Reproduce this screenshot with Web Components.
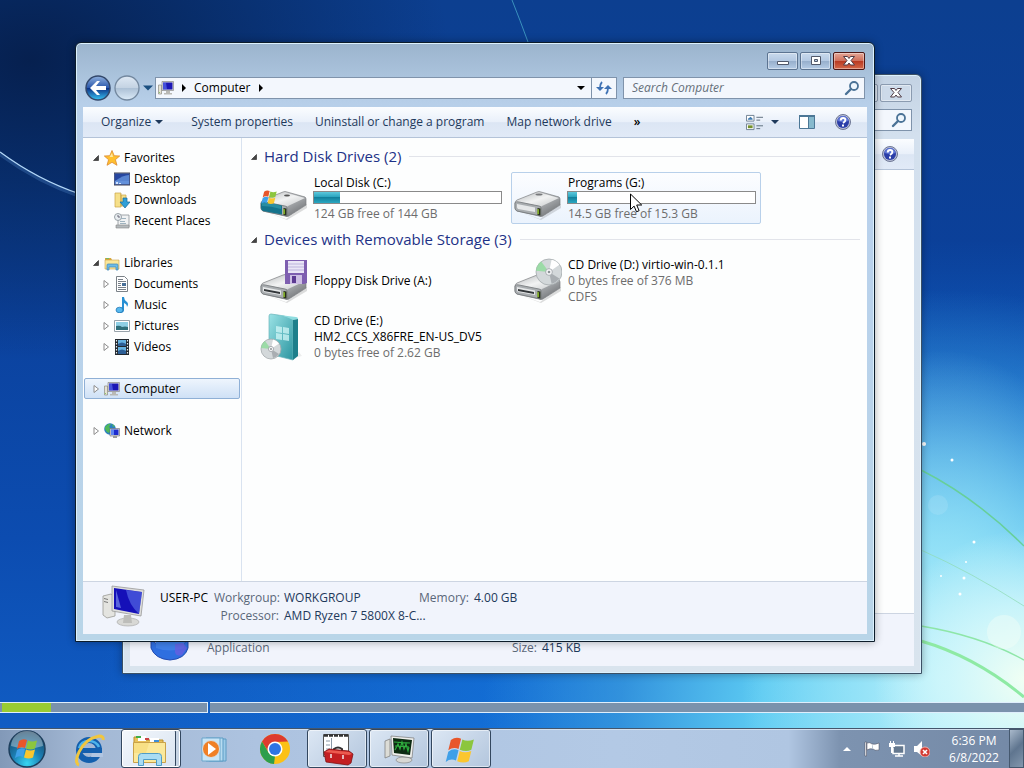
<!DOCTYPE html>
<html lang="en">
<head>
<meta charset="utf-8">
<title>Computer</title>
<style>
html, body{
    margin:0;
    height:100%;
}
body{
    font-family:"Open Sans", "Noto Sans", sans-serif;
    font-size:12px;
    line-height:16px;
    color:#000;
}
</style>
</head>
<body>
<desk-top>
    <explorer-window class="back" inactive placeholder="Search">
        <file-details slot="details" icon="app" wide>
            <span></span><span></span><span></span><span></span>
            <span class="kind">Application</span><span></span><span class="key">Size:</span><span class="val">415 KB</span>
        </file-details>
    </explorer-window>
    <explorer-window class="front" location="Computer" placeholder="Search Computer">
        <nav-tree slot="tree"></nav-tree>
        <drive-group label="Hard Disk Drives (2)">
            <drive-tile icon="cdrive" label="Local Disk (C:)" used="14" note="124 GB free of 144 GB"></drive-tile>
            <drive-tile icon="drive" label="Programs (G:)" used="5" note="14.5 GB free of 15.3 GB" hot></drive-tile>
        </drive-group>
        <drive-group label="Devices with Removable Storage (3)">
            <drive-tile icon="floppy" label="Floppy Disk Drive (A:)"></drive-tile>
            <drive-tile icon="cd" label="CD Drive (D:) virtio-win-0.1.1" note="0 bytes free of 376 MB" extra="CDFS"></drive-tile>
            <drive-tile icon="box" label="CD Drive (E:)" second="HM2_CCS_X86FRE_EN-US_DV5" note="0 bytes free of 2.62 GB"></drive-tile>
        </drive-group>
        <file-details slot="details" icon="pc">
            <span class="name">USER-PC</span><span class="key">Workgroup:</span><span class="val">WORKGROUP</span><span class="key">Memory:</span><span class="val">4.00 GB</span>
            <span></span><span class="key">Processor:</span><span class="val">AMD Ryzen 7 5800X 8-C...</span>
        </file-details>
    </explorer-window>
    <progress-strip slot="strip"></progress-strip>
    <task-bar slot="bar"></task-bar>
</desk-top>

<script>
// every icon: [viewBox, markup]
const flag = `<path fill="#e8562a" d="M3 4q4-3 8-1L9 11q-4-2-8 1z"/><path fill="#8cc63e" d="M12 3.500q4 2 9 0l-2 8q-4 2-9 0z"/><path fill="#3fa0e8" d="M1 13q4-3 8-1l-2 8q-4-2-8 1z"/><path fill="#fbc62e" d="M10 12.500q4 2 9 0l-2 8q-4 2-9 0z"/>`;
const glass = `<linearGradient id="m" x2="1" y2="1"><stop stop-color="#f4f4f4"/><stop offset=".5" stop-color="#b0b3b6"/><stop offset="1" stop-color="#5f6265"/></linearGradient><linearGradient id="t" x2="1" y2="1"><stop stop-color="#b9bcbe"/><stop offset=".5" stop-color="#f2f3f3"/><stop offset="1" stop-color="#c4c7c9"/></linearGradient>`;
const driveBody = `${glass}<path fill="#0002" d="M6 38l20 7 21-15v4L27 46z"/><path fill="url(#m)" stroke="#7c7f82" stroke-width=".7" d="M1 29Q1 27 3 26L23 18q2-1 4 0l18 5q1 1 1 2v6L29 42q-2 1-4 0L3 37q-2-1-2-3z"/><path fill="url(#t)" d="M3 27l20-8q2-1 4 0l18 5-17 8q-1 1-3 0z"/><path fill="#a9adb0" stroke="#6f7376" stroke-width=".7" d="M1 29q1-2 4-1l20 4q2 0 2 2v8L3 37q-2-1-2-3z"/><path fill="#e6e8e9" d="M3 30l18 3.500v4.500L4 35q-1-1-1-2z"/><path fill="#28301c" d="M23.500 34l3 .500v7l-3-.500z"/><path fill="#a6e02c" d="M23.500 35l1.200.200v5l-1.200-.200z"/>`;
const disc = (x, y, r) => `<circle cx="${x}" cy="${y}" r="${r}" fill="#d3d8da" stroke="#a3a9ac" stroke-width=".8"/><path fill="#8fdc9a" opacity=".8" d="M${x} ${y}l${-r} ${-r * .1}a${r} ${r} 0 0 1 ${r * .4} ${-r * .7}z"/><path fill="#a9aeb2" d="M${x} ${y}l${r * .8} ${r * .5}a${r} ${r} 0 0 1 ${-r * .6} ${r * .4}z"/><path fill="#fff" d="M${x} ${y}l${r * .2} ${-r * .95}a${r} ${r} 0 0 1 ${r * .6} ${r * .4}z"/><circle cx="${x}" cy="${y}" r="${r * .26}" fill="#f5f6f7" stroke="#9aa0a4" stroke-width=".8"/><circle cx="${x}" cy="${y}" r="${r * .1}" fill="#8c9296"/>`;
const folder = `<path fill="#d9a93c" d="M1 3h6l1 2h6v9H1z"/><path fill="#fbe79a" stroke="#c9a24a" stroke-width=".6" d="M1 5h14v9H1z"/>`;
const icons = {
    star:['0 0 16 16', `<path fill="#ffc02f" stroke="#dd8a30" stroke-width=".8" d="M8 .500l2.200 5.200 5.500.300-4.300 3.700L13 15.300 8 12.300l-5 3 1.600-5.600L.300 6l5.500-.300z"/><path fill="#ffe9a0" d="M8 3l1 4H5.500z"/>`],
    desktop:['0 0 16 16', `<rect y="2" width="16" height="12" fill="#4a6fc0" stroke="#445"/><path fill="#2747a0" d="M1 3h14v7H1z"/><path fill="#6fa0e6" d="M1 10q8-6 14-6v9H1z" opacity=".7"/><path fill="#cfe2ff" d="M2 11h2v2H2zM5 12h2v1H5z"/>`],
    downloads:['0 0 16 16', `<path fill="#f6e08a" stroke="#c9a445" stroke-width=".7" d="M1 1h6v14H1zM7 3h5v11H7z"/><path fill="#dcb95a" d="M6 2h1v13H6z"/><path fill="#2f9fd8" stroke="#166a9c" stroke-width=".7" d="M9 6h4v4h3l-5 6-5-6h3z"/>`],
    recent:['0 0 16 16', `<path fill="#f0f2f3" stroke="#8b9398" stroke-width=".8" d="M5 2h10v12H4V6z"/><circle cx="4" cy="4" r="3.500" fill="#e9eef1" stroke="#9aa2a8"/><path stroke="#667" fill="none" d="M4 2v2h2"/><path fill="#9fb3bf" d="M7 5h5v1H7zM6 8h5v1H6zM6 10h6v1H6z"/><path fill="#b4babd" stroke="#888" stroke-width=".6" d="M2 12h13v3H2z"/>`],
    libraries:['0 0 16 16', folder + `<path fill="#78b968" d="M2 3h3v1H2z"/><path fill="#6dbbe6" stroke="#3d86b8" stroke-width=".7" d="M3 15V10q0-1 1-1h9q1 0 1 1v5h-2v-3H5v3z"/>`],
    documents:['0 0 16 16', `<path fill="#fff" stroke="#7b8288" d="M2.500.500h8l3 3v12h-11z"/><path fill="#777f88" d="M4 3h5v1H4zM4 5h8v1H4zM4 7h3v1H4zM4 9h3v1H4zM4 11h8v1H4zM4 13h8v1H4z"/><path fill="#476f98" d="M8 7h4v3H8z"/>`],
    music:['0 0 16 16', `<path fill="#2790d4" d="M8 0h2q0 3 3 5 2 2 0 5 0-3-3-4v7q0 3-4 3-3-.500-3-3 1-3 5-2.500z"/><ellipse cx="5.500" cy="13" rx="3.500" ry="2.800" fill="#56b8ee" stroke="#1c70ae" stroke-width=".7"/>`],
    pictures:['0 0 16 16', `<path fill="#fff" stroke="#98a3ab" d="M.500 2.500h15v11H.500z"/><path fill="#8fd0e6" d="M2 4h12v8H2z"/><path fill="#30707c" d="M2 8q4-1 6 1 3-1 6 0v3H2z"/>`],
    videos:['0 0 16 16', `<path fill="#22282e" d="M1 0h14v16H1z"/><path fill="#67b2e0" d="M4 1h8v6H4zM4 8h8v7H4z"/><path fill="#2d5f96" d="M4 5q4-3 8 0v2H4zM4 12q4-3 8 0v3H4z"/><path stroke="#e8eef2" stroke-width="1.200" stroke-dasharray="1.500 1.500" d="M2.500 1v14M13.500 1v14"/>`],
    computer:['0 0 16 16', `<path fill="#e6e2d3" stroke="#8d8d84" stroke-width=".7" d="M.500 5h3v9h-3z"/><path fill="#8fce6a" d="M1 12h1v1H1z"/><path fill="#dcdcda" stroke="#8a8a8a" stroke-width=".7" d="M4 1.500h11.500v9H4z"/><path fill="#1b17b5" d="M5 2.500h9.500v7H5z"/><path fill="#6f8bff" d="M5 2.500h3l1 7H5z" opacity=".5"/><path fill="#b9b9b5" d="M8 11h4v2h2v1.500H6V13h2z"/>`],
    network:['0 0 16 16', `<circle cx="6" cy="6" r="5.800" fill="#2a7fc0"/><path fill="#4fb75a" d="M1 4q3-4 6-3l-2 3 2 2-2 4q-3-1-4-4zM8 1l3 2-2 1z"/><path fill="#dcdcda" stroke="#667" stroke-width=".6" d="M6 5.500h9.500v7.500H6z"/><path fill="#1d2ccf" d="M7 6.500h7.500V12H7z"/><path fill="#78a9ff" d="M7 6.500h3V12H7z" opacity=".7"/><path fill="#999" d="M9 13h4v2H9z"/>`],
    drive:['0 0 48 48', driveBody + `<ellipse cx="25" cy="20.500" rx="3.500" ry="1" fill="#77797c"/>`],
    cdrive:['0 0 48 48', driveBody + `<path fill="#15738c" d="M1 29q1-2 4-1l17 3.500v9L3 37q-2-1-2-3z"/><path fill="#2f93a8" opacity=".8" d="M2 29q8-1 19 3v3q-10-3-19-3z"/><ellipse cx="27" cy="21.500" rx="3" ry="1" fill="#555"/><g transform="translate(2 15) scale(.7)">${flag}</g>`],
    floppy:['0 0 48 48', driveBody + `<path fill="#33373a" d="M4 32l16 3v2L4 34z"/><path fill="#7e5fb0" d="M25 3h22v23l-3 1H25z"/><path fill="#eae6f6" d="M28 4h16v12H28z"/><path stroke="#bcb4dc" d="M28 7h16M28 10h16M28 13h16"/><path fill="#cdbfe4" d="M30 18h12v9H30z"/><path fill="#5c3a92" d="M32 19h4v7h-4z"/>`],
    cd:['0 0 48 48', driveBody + `<path fill="#33373a" d="M4 32l16 3v2L4 34z"/>` + disc(35, 15, 13)],
    box:['0 0 48 48', `<linearGradient id="b" x2="1" y2="1"><stop stop-color="#9be3e6"/><stop offset="1" stop-color="#2b95a0"/></linearGradient><path fill="#0001" d="M30 46l12-3-3-4z"/><path fill="url(#b)" stroke="#6bb5ba" stroke-width=".7" d="M9 3q0-2 2-2 13 1 22 5v41L9 41z"/><path fill="#8fdde0" d="M11 1l25 3q2 0 2 2l-5 1Q24 2 11 1z"/><path fill="#1d7f8b" d="M33 7l5-1v37l-5 4z"/><g fill="#d9fbfb" opacity=".7"><path d="M16 13l6 1v6l-6-1zM23 14l6 1v6l-6-1zM16 20l6 1v6l-6-1zM23 21l6 1v6l-6-1z"/></g>` + disc(11, 36, 10)],
    pc:['0 0 48 48', `<path fill="#e4e4e0" stroke="#9a9a96" stroke-width=".8" d="M4 13l8-2 4 3v19l-8 2-4-3z"/><path fill="#777" d="M5 15l4 1v1l-4-1zM5 18l4 1v1l-4-1z"/><ellipse cx="29" cy="39" rx="11" ry="4" fill="#d8d8d5" stroke="#aaa" stroke-width=".7"/><path fill="#bdbdba" d="M25 32h7l1 8h-9z"/><path fill="#dededc" stroke="#999" stroke-width=".8" d="M13 3l32 4-3 26-29-5z"/><path fill="#1510b8" d="M15 5l28 4-3 22-25-5z"/><path fill="#6c88f4" d="M27 7l16 2-3 22q-10-9-13-24z" opacity=".5"/><path fill="#9fb8ff" d="M17 7l5 18-5-1z" opacity=".5"/>`],
    app:['0 0 48 48', `<path fill="#2f6fe0" stroke="#234ab0" d="M5 25l6 4q12-6 26 0l5-4v8q-3 11-18 12Q9 44 5 33z"/><path fill="#3f7fe8" d="M10 24h28v9q-14 5-28 0z"/><path fill="#6f5ce0" d="M29 29l8-1 4 5-5 7q-6 2-7-3z" opacity=".7"/>`],
    refresh:['0 0 16 16', `<path fill="none" stroke="#3f72b4" stroke-width="1.800" d="M6 2Q4 4 4 8M10 14q2-2 2-6"/><path fill="#3f72b4" d="M0 7h8l-4 4zM8 9h8l-4-4z"/>`],
    lens:['0 0 16 16', `<circle cx="10" cy="6" r="4" fill="#eef6fd" stroke="#4a7296" stroke-width="1.800"/><path stroke="#4a7296" stroke-width="2.400" stroke-linecap="round" d="M7 9l-5 5"/>`],
    help:['0 0 16 16', `<circle cx="8" cy="8" r="7.500" fill="#b8bfd8" stroke="#6d7694"/><circle cx="8" cy="8" r="6" fill="#2b3ea8"/><path fill="#5d74d4" d="M2.500 7a5.500 5 0 0 1 11 0q-5 2-11 0z"/><path fill="none" stroke="#fff" stroke-width="1.900" d="M5.700 6.500q0-2.500 2.400-2.500 2.300 0 2.300 2Q10.400 7.500 8 9"/><path fill="#fff" d="M7 10.500h2v2H7z"/>`],
    views:['0 0 18 16', `<path fill="#fff" stroke="#6d7f92" d="M.500.500h8v6h-8zM.500 9.500h8v6h-8z"/><path fill="#3f7bb0" d="M2 4l3-2 2 2v1H2z"/><path fill="#74912a" d="M2 11h5v3H2z"/><path stroke="#5a6a7a" d="M11 2.500h7M11 5.500h4M11 11.500h7M11 14.500h4"/>`],
    pane:['0 0 16 16', `<path fill="#fff" stroke="#4c7796" d="M.500 1.500h15v13H.500z"/><path fill="#4c7796" d="M0 1h16v2H0z"/><path fill="#86b9cd" d="M10 3h5v11h-5z"/><path stroke="#4c7796" d="M9.500 3v11"/>`],
    back:['0 0 26 26', `<linearGradient id="k" x2="0" y2="1"><stop stop-color="#8fb0de"/><stop offset=".48" stop-color="#2c59ac"/><stop offset=".52" stop-color="#0d3488"/><stop offset="1" stop-color="#37c4f4"/></linearGradient><circle cx="13" cy="13" r="12" fill="url(#k)" stroke="#33486b" stroke-width="1.500"/><path fill="#fff" d="M5 13l7-7h3l-4 5h10v4H11l4 5h-3z"/>`],
    forward:['0 0 26 26', `<linearGradient id="k" x2="0" y2="1"><stop stop-color="#dfe9f4"/><stop offset=".48" stop-color="#c4d3e3"/><stop offset=".52" stop-color="#adc1d6"/><stop offset="1" stop-color="#dcebf8"/></linearGradient><circle cx="13" cy="13" r="12" fill="url(#k)" stroke="#73889f" stroke-width="1.300"/>`],
    down:['0 0 8 8', `<path fill="currentColor" d="M0 2h8L4 6z"/>`],
    right:['0 0 8 8', `<path fill="currentColor" d="M2 0l4 4-4 4z"/>`],
    open:['0 0 8 8', `<path fill="#444" stroke="#222" stroke-width=".6" d="M6.500 1.500v5h-5z"/>`],
    shut:['0 0 8 8', `<path fill="#fff" stroke="#8d8d8d" d="M2 .500L6.500 4 2 7.500z"/>`],
    min:['0 0 14 12', `<path fill="#fff" stroke="#50586a" d="M1.500 6.500h11v3h-11z"/>`],
    max:['0 0 14 12', `<path fill="#fff" stroke="#50586a" d="M2.500 1.500h9v8h-9z"/><path fill="#b9cce2" stroke="#50586a" d="M5.500 4.500h3v2h-3z"/>`],
    close:['0 0 14 12', `<path fill="#fff" stroke="#4f3b45" d="M1.500 1.500h4L7 3.500l1.500-2h4L9 5.500l3.500 4.500h-4L7 8l-1.500 2h-4L5 5.500z"/>`],
    orb:['0 0 40 40', `<radialGradient id="o" cx=".5" cy=".9" r=".9"><stop stop-color="#38d6f2"/><stop offset=".45" stop-color="#1c7fb4"/><stop offset="1" stop-color="#16405f"/></radialGradient><circle cx="20" cy="20" r="18" fill="url(#o)" stroke="#1d3e5c" stroke-width="1.500"/><path fill="#fff" opacity=".35" d="M4 17a16 15 0 0 1 32 0q-16 5-32 0z"/><g transform="translate(9 8)">${flag}</g>`],
    ie:['0 0 36 36', `<circle cx="18" cy="19" r="10" fill="none" stroke="#135fae" stroke-width="6"/><path fill="#135fae" d="M10 17h21v5H10z"/><path fill="#b0c5e1" d="M21 22h11v4H20z"/><path fill="none" stroke="#4db4ea" stroke-width="2.500" d="M8 17q2-7 10-7 7 0 10 6"/><path fill="none" stroke="#f0c63f" stroke-width="3" d="M8 34q-5-2 0-13Q14 8 28 5q5 0 4 4"/>`],
    explorer:['0 0 36 36', `<path fill="#e9c25a" stroke="#b98e2d" d="M3 6h9l2 3h18v22H3z"/><path fill="#fff" d="M7 5h8v5H7zM19 7h9v5h-9z"/><path fill="#3fae49" d="M5 5h5v2H5z"/><path fill="#c44" d="M14 7h4v2h-4z"/><path fill="#3d8fd8" d="M23 9h5v2h-5z"/><path fill="#fbe99b" stroke="#c9a24a" d="M2.500 11.500h32v20h-32z"/><path fill="#f5d770" d="M3 12h15l-3 10H3z" opacity=".5"/><path fill="#a9dcf3" stroke="#4f9cc6" d="M7.500 34.500v-9q0-3 3-3h17q3 0 3 3v9h-5v-6h-13v6z"/>`],
    wmp:['0 0 36 36', `<path fill="#9dcbe8" stroke="#5d9cc4" d="M14 8h17v22H14z"/><path fill="#b7dcf1" stroke="#5d9cc4" d="M11 7h17v23H11z"/><path fill="#c8e5f6" stroke="#6aa6cb" d="M7 7h18v23H7z"/><circle cx="16" cy="18" r="8.500" fill="#f08025" stroke="#d9dfe2"/><path fill="#fff" d="M13 12l8 6-8 6z"/>`],
    chrome:['0 0 36 36', `<circle cx="18" cy="18" r="15" fill="#fbc116"/><path fill="#dd3a2e" d="M5 10.500A15 15 0 0 1 31 10.500L18 11l-6.500 10z"/><path fill="#2c9e4b" d="M5 10.500l6.500 11L18 25l-1 8A15 15 0 0 1 5 10.500z"/><circle cx="18" cy="18" r="7.500" fill="#fff"/><circle cx="18" cy="18" r="6" fill="#2f74e4"/>`],
    toolbox:['0 0 36 36', `<path fill="#fff" stroke="#555" d="M4.500 3.500h25v22h-25z"/><path stroke="#333" stroke-width="2.500" stroke-dasharray="4 1" d="M5 4.500h24"/><path stroke="#8a99a8" d="M7 10h4M7 14h4M7 18h4M12.500 7v17"/><path fill="none" stroke="#333" stroke-width="2" d="M15 20v-2q4-3 8 0v2"/><path fill="#c41f22" stroke="#7e1012" stroke-width=".8" d="M5 21l5-3 20 2 4 3-2 9-3 2L7 31z"/><path fill="#ec5a4f" d="M6 21l4-2 20 2 3 2-3 1z"/><path stroke="#eee" stroke-width="1.500" d="M12 23v4M24 24v4"/>`],
    monitor:['0 0 36 36', `<path fill="#dcdcd6" stroke="#777" stroke-width=".7" d="M4 10l5-2v17l-5 2z"/><ellipse cx="23" cy="29" rx="8" ry="3" fill="#d8d8d4" stroke="#888" stroke-width=".7"/><path fill="#efefec" stroke="#777" stroke-width=".7" d="M10 5l23 2-2 20-20-3z"/><path fill="#0d2a12" d="M12 7l19 2-2 15-16-2z"/><path fill="none" stroke="#2fae3f" stroke-width="1.200" d="M14 19l3-6 2 5 2-7 2 7 2-5 2 7 1-4M13 11l16 1M14 15l14 1"/>`],
    windows:['0 0 36 36', `<g transform="translate(4 4) scale(1.280)">${flag}</g>`],
    up:['0 0 16 16', `<path fill="#fff" d="M4 10h8L8 6z"/>`],
    action:['0 0 16 16', `<path fill="#fff" stroke="#445" stroke-width=".5" d="M1 1h1.500v14H1zM3 2q3-1 5 1 3 1 7-1v7q-4 1-6-1-3-1-6 1z"/><path fill="#b7c2ce" d="M8 3q1 1 1 5h-1z"/>`],
    lan:['0 0 16 16', `<path fill="#64788f" stroke="#fff" stroke-width="1.500" d="M5 4.500h10v8H4v-6"/><path stroke="#fff" stroke-width="1.500" d="M6 15h8M10 12v3"/><path fill="#fff" d="M0 2h6v4H0zM2 6h2v6H2zM1 0h1v2H1zM4 0h1v2H4z"/>`],
    sound:['0 0 16 16', `<path fill="#fff" d="M0 5h3l5-5v15l-5-4H0z"/><circle cx="11" cy="11" r="5" fill="#d33a32" stroke="#f2c4c0" stroke-width=".8"/><path stroke="#fff" stroke-width="1.600" d="M9 9l4 4M13 9l-4 4"/>`]
};

function attach(el, css, html){
    const template = document.createElement('template');
    template.innerHTML = `<style>*{box-sizing:border-box} button{font:inherit;color:inherit;background:none;border:0;padding:0;display:flex;align-items:center}${css}</style>${html}`;
    el.attachShadow({mode:'open'});
    el.shadowRoot.appendChild(template.content.cloneNode(true));
}

class WinIcon extends HTMLElement{
    connectedCallback(){
        const [box, art] = icons[this.getAttribute('name')];
        const size = this.getAttribute('size') || 16;
        attach(this, `:host{display:block;flex:none;width:${size}px;height:${size}px} svg{display:block;width:100%;height:100%}`,
            `<svg viewBox="${box}" aria-hidden="true">${art}</svg>`);
    }
}

class DeskTop extends HTMLElement{
    connectedCallback(){
        attach(this, `
:host{
    display:flex;
    flex-direction:column;
    min-height:100vh;
    position:relative;
    overflow:hidden;
    background:
        radial-gradient(ellipse 150px 150px at 100% 680px, #f0fff4 0%, #d4f8fbcc 50%, transparent 100%),
        radial-gradient(ellipse 200px 330px at 92% 680px, #b9f0fb 0%, #9fe6f8cc 40%, transparent 100%),
        radial-gradient(ellipse 460px 440px at 92% 730px, #7fe0f8 0%, #5ccaf2 40%, #3f9fdeaa 70%, transparent 100%),
        radial-gradient(ellipse 880px 480px at 95% 720px, #2b9cec 0%, #1579e0aa 50%, transparent 100%),
        radial-gradient(ellipse 420px 300px at 30px 60px, #06204f 0%, #07285fcc 40%, transparent 100%),
        linear-gradient(180deg, #0c3f90 0%, #0b409a 35%, #0c4cb0 70%, #1160c8 100%);
}
.beams, .ray{
    position:absolute;
    top:0;
}
.beams{
    right:0;
    width:520px;
    height:730px;
}
.ray{
    left:0;
    width:80px;
    height:200px;
}
main{
    flex:1;
}
::slotted(.front){
    position:absolute;
    inset:42px 149px 126px 75px;
}
::slotted(.back){
    position:absolute;
    inset:74px 102px 94px 122px;
}
.cursor{
    position:absolute;
    left:630px;
    top:193px;
    width:13px;
    height:20px;
}
`, `
<svg class="ray" viewBox="0 0 80 200" fill="none"><path stroke="#5f9be0" stroke-width="4" opacity=".25" d="M0 154q38 28 80 42"/><path stroke="#b4d8f8" stroke-width="1.300" d="M0 152q38 28 80 42"/></svg>
<svg class="beams" viewBox="0 0 520 730" fill="none">
    <path stroke="#4fb3d0" opacity=".7" d="M8 0q8 20 16 42"/>
    <path stroke="#67cf9a" stroke-width="1.500" d="M417 470q55 28 103 76"/>
    <path stroke="#8fdcb4" opacity=".7" d="M417 550q50 22 103 56"/>
    <path stroke="#8ee6a8" stroke-width="1.500" d="M417 626q60 10 103 34"/>
    <path stroke="#8eeaa4" stroke-width="3" d="M417 641q55 16 103 56"/>
    <circle cx="500" cy="632" r="17" fill="#f4fff8" opacity=".4"/>
    <circle cx="434" cy="505" r="10" fill="#c6ecf8" opacity=".2"/>
    <g fill="#fff"><circle cx="420" cy="444" r="2"/><circle cx="448" cy="460" r="1.500"/><circle cx="470" cy="542" r="1.500"/><circle cx="462" cy="562" r="1"/><circle cx="460" cy="578" r="1.500"/><circle cx="437" cy="576" r="1"/><circle cx="456" cy="594" r="1.500"/></g>
</svg>
<main><slot></slot></main>
<slot name="strip"></slot>
<slot name="bar"></slot>
<svg class="cursor" viewBox="0 0 13 20"><path fill="#fff" stroke="#000" d="M.500 1v15.500l3.600-3.400 2.400 5.700 2.600-1.100L6.700 12h5z"/></svg>`);
    }
}

class ExplorerWindow extends HTMLElement{
    connectedCallback(){
        const location = this.getAttribute('location');
        attach(this, `
:host{
    display:flex;
    flex-direction:column;
    box-sizing:border-box;
    padding:8px 7px 7px;
    border:1px solid #0c1c2a;
    border-radius:6px 6px 0 0;
    box-shadow:inset 0 0 0 1px #dcf1fd, 0 0 8px #0005;
    background:linear-gradient(180deg, #9bb4cd 0, #b7cfe9 60px, #b9d1ec 150px, #b9d5e8 100%);
    --box:#f3f7fd;
    --cap:linear-gradient(180deg, #c9daed 0%, #b4c9e2 48%, #97afcc 52%, #b5cce6 100%);
    --capline:#5c7491;
}
:host([inactive]){
    background:linear-gradient(180deg, #c3d2e3 0, #d3e0ee 60px, #d9e4ee 100%);
    border-color:#3c5064;
    --cap:#cddae9;
    --capline:#8b9bb0;
}
.caption{
    display:flex;
    justify-content:flex-end;
    gap:2px;
    padding:1px 2px 0;
    height:21px;
}
.caption button{
    width:31px;
    height:18px;
    justify-content:center;
    border:1px solid var(--capline);
    border-radius:2px;
    box-shadow:inset 0 0 0 1px #ffffff66;
    background:var(--cap);
}
.caption .close{
    width:32px;
}
:host(:not([inactive])) .close{
    border-color:#4d1715;
    background:linear-gradient(180deg, #e4a697 0%, #d0705c 48%, #b93a22 52%, #d4694a 100%);
}
.nav{
    display:flex;
    align-items:center;
    padding:0 2px;
    margin-bottom:3px;
    height:32px;
}
.nav .hist{
    gap:3px;
    color:#1b4f80;
    width:70px;
}
.address, .search{
    display:flex;
    align-items:center;
    height:22px;
    border:1px solid #7f93ab;
    background:var(--box);
}
.address{
    flex:1;
    padding-left:2px;
    color:#000;
}
.address .path{
    flex:1;
    display:flex;
    align-items:center;
    gap:6px;
}
.address .refresh{
    border-left:1px solid #7f93ab;
    margin-left:6px;
    height:100%;
    padding:0 4px;
}
.search{
    width:242px;
    margin-left:6px;
    padding-right:4px;
}
.search input{
    flex:1;
    min-width:0;
    padding:0 8px;
    border:0;
    outline:0;
    background:none;
    font:italic 12px/16px "Open Sans", "Noto Sans", sans-serif;
}
.search input::placeholder{
    color:#666f7a;
    opacity:1;
}
.tools{
    display:flex;
    align-items:center;
    gap:22px;
    height:31px;
    padding:0 16px 0 18px;
    color:#1e395b;
    white-space:nowrap;
    border-bottom:1px solid #b4c3d8;
    background:linear-gradient(180deg, #fbfdff 0%, #e9f0fa 50%, #dce6f4 52%, #e1eaf7 100%);
}
.tools button{
    gap:4px;
}
.tools .menu{
    padding-right:6px;
}
.tools .more{
    color:#000;
    font-weight:600;
}
.tools .right{
    display:flex;
    gap:20px;
    margin-left:auto;
}
.tools .right button:first-child{
    gap:8px;
}
.body{
    flex:1;
    display:flex;
    min-height:0;
    background:#fdfefe;
}
.files{
    flex:1;
    padding:3px 7px 0 8px;
}
`, `
<div class="caption">
    <button aria-label="Minimize"><win-icon name="min" size="14"></win-icon></button>
    <button aria-label="Maximize"><win-icon name="max" size="14"></win-icon></button>
    <button class="close" aria-label="Close"><win-icon name="close" size="14"></win-icon></button>
</div>
<div class="nav">
    <button class="hist" aria-label="Back and forward"><win-icon name="back" size="26"></win-icon><win-icon name="forward" size="26"></win-icon><win-icon name="down" size="10"></win-icon></button>
    <div class="address">
        <div class="path"><win-icon name="computer"></win-icon>${location ? `<win-icon name="right" size="8"></win-icon><span>${location}</span><win-icon name="right" size="8"></win-icon>` : ''}</div>
        <button aria-label="Previous locations"><win-icon name="down" size="8"></win-icon></button>
        <button class="refresh" aria-label="Refresh"><win-icon name="refresh"></win-icon></button>
    </div>
    <div class="search"><input type="text" aria-label="Search" placeholder="${this.getAttribute('placeholder')}"><win-icon name="lens"></win-icon></div>
</div>
<div class="tools">
    ${location ? `<button class="menu">Organize <win-icon name="down" size="8"></win-icon></button>
    <button>System properties</button>
    <button>Uninstall or change a program</button>
    <button>Map network drive</button>
    <button class="more">»</button>` : ''}
    <div class="right">
        <button aria-label="Views"><win-icon name="views" size="17"></win-icon><win-icon name="down" size="8"></win-icon></button>
        <button aria-label="Preview pane"><win-icon name="pane"></win-icon></button>
        <button aria-label="Help"><win-icon name="help"></win-icon></button>
    </div>
</div>
<div class="body"><slot name="tree"></slot><div class="files"><slot></slot></div></div>
<slot name="details"></slot>`);
    }
}

class NavTree extends HTMLElement{
    connectedCallback(){
        const groups = [
            ['open', 'star', 'Favorites', [['desktop', 'Desktop'], ['downloads', 'Downloads'], ['recent', 'Recent Places']]],
            ['open', 'libraries', 'Libraries', [['documents', 'Documents'], ['music', 'Music'], ['pictures', 'Pictures'], ['videos', 'Videos']]],
            ['shut', 'computer', 'Computer', []],
            ['shut', 'network', 'Network', []]
        ];
        const html = groups.map(([arrow, icon, label, kids]) => `
<section>
    <button class="${label === 'Computer' ? 'on' : ''}"><win-icon name="${arrow}" size="8"></win-icon><win-icon name="${icon}"></win-icon>${label}</button>
    ${kids.map(kid => `<button class="kid"><win-icon name="shut" size="8" class="${icon === 'star' ? 'none' : ''}"></win-icon><win-icon name="${kid[0]}"></win-icon>${kid[1]}</button>`).join('')}
</section>`).join('');
        attach(this, `
:host{
    display:flex;
    flex-direction:column;
    gap:21px;
    flex:none;
    box-sizing:border-box;
    width:159px;
    padding:9px 1px 0;
    border-right:1px solid #d9e3f0;
}
button{
    width:100%;
    height:21px;
    gap:4px;
    padding-left:7px;
    border:1px solid transparent;
    border-radius:2px;
}
.kid{
    padding-left:17px;
}
.none{
    visibility:hidden;
}
.on{
    border-color:#8fb0d6;
    background:linear-gradient(180deg, #eef5fd, #cfe1f6);
}
`, html);
    }
}

class DriveGroup extends HTMLElement{
    connectedCallback(){
        attach(this, `
:host{
    display:block;
}
header{
    display:flex;
    align-items:center;
    gap:6px;
    height:31px;
}
h2{
    margin:0;
    padding-bottom:2px;
    font-size:15px;
    line-height:20px;
    font-weight:400;
    color:#1e3287;
}
hr{
    flex:1;
    margin:0 0 0 2px;
    border:0;
    border-top:1px solid #e2e4ea;
}
.grid{
    display:grid;
    grid-template-columns:repeat(auto-fill, 250px);
    gap:4px;
    padding-left:7px;
}
`, `<header><win-icon name="open" size="8"></win-icon><h2>${this.getAttribute('label')}</h2><hr></header><div class="grid"><slot></slot></div>`);
    }
}

class DriveTile extends HTMLElement{
    connectedCallback(){
        const get = name => this.getAttribute(name);
        attach(this, `
:host{
    display:flex;
    align-items:center;
    gap:5px;
    box-sizing:border-box;
    height:52px;
    padding:0 4px 0 2px;
    border:1px solid transparent;
    border-radius:2px;
}
:host([hot]){
    border-color:#b8d0ea;
    background:linear-gradient(180deg, #fcfdff, #ebf3fd);
}
.text{
    flex:1;
    white-space:nowrap;
}
.text div{
    padding-left:1px;
}
.text .note{
    color:#6d6d6d;
}
.text .bar{
    height:13px;
    margin-bottom:2px;
    padding:0;
    border:1px solid #8a8a8a;
    background:#fff;
}
.bar div{
    height:100%;
    background:linear-gradient(180deg, #5cc8dc 0%, #2aa4be 45%, #12809c 50%, #2aa8c2 100%);
}
`, `
<win-icon name="${get('icon')}" size="48"></win-icon>
<div class="text">
    <div>${get('label')}</div>
    ${get('second') ? `<div>${get('second')}</div>` : ''}
    ${get('used') ? `<div class="bar"><div style="width:${get('used')}%"></div></div>` : ''}
    ${get('note') ? `<div class="note">${get('note')}</div>` : ''}
    ${get('extra') ? `<div class="note">${get('extra')}</div>` : ''}
</div>`);
    }
}

class FileDetails extends HTMLElement{
    connectedCallback(){
        attach(this, `
:host{
    display:flex;
    align-items:center;
    gap:13px;
    box-sizing:border-box;
    height:53px;
    padding:0 16px 2px;
    border-top:1px solid #cdd5e2;
    background:#f1f4fc;
    --cols:49px 65px 128px 52px 1fr;
}
:host([wide]){
    --cols:230px 60px 30px 1fr;
}
.grid{
    flex:1;
    display:grid;
    grid-template-columns:var(--cols);
    grid-auto-rows:18px;
    align-items:center;
    column-gap:5px;
    white-space:nowrap;
}
::slotted(.key){
    text-align:right;
    color:#5a6779;
}
::slotted(.kind){
    color:#5a6779;
}
::slotted(.val){
    color:#1e395b;
}
`, `<win-icon name="${this.getAttribute('icon')}" size="48"></win-icon><div class="grid"><slot></slot></div>`);
    }
}

class ProgressStrip extends HTMLElement{
    connectedCallback(){
        attach(this, `
:host{
    display:flex;
    gap:2px;
    height:11px;
    margin-bottom:15px;
    position:relative;
}
div{
    border:1px solid #dfeefc;
    border-left:0;
    background:#7a92ac;
}
.one{
    width:208px;
    padding-left:2px;
}
.two{
    flex:1;
    border-right:0;
}
i{
    display:block;
    width:49px;
    height:100%;
    background:#99cc33;
}
`, `<div class="one"><i></i></div><div class="two"></div>`);
    }
}

class TaskBar extends HTMLElement{
    connectedCallback(){
        const apps = [['ie', 'Internet Explorer', ''], ['explorer', 'Windows Explorer', 'run many'], ['wmp', 'Media Player', ''], ['chrome', 'Chrome', ''], ['toolbox', 'Tools', 'run'], ['monitor', 'Task Manager', 'run'], ['windows', 'Setup', 'run']];
        attach(this, `
:host{
    display:flex;
    position:relative;
    height:40px;
    box-sizing:border-box;
    border-top:1px solid #44566c;
    box-shadow:inset 0 1px 0 #d3e1f0;
    color:#fff;
    background:linear-gradient(90deg, #8299b8 0%, #a3b8d4 8%, #adc3e0 25%, #b3c9e5 60%, #b0c6e2 77%, #7d93b0 82%, #7489a6 100%);
}
.start{
    width:59px;
    padding-left:7px;
}
.apps{
    display:flex;
    flex:1;
    gap:2px;
}
.apps button{
    width:60px;
    justify-content:center;
    border:1px solid transparent;
    border-radius:3px;
}
.apps .run{
    border-color:#33475f;
    background:linear-gradient(135deg, #dce7f4, #b3c6dd);
    box-shadow:inset 0 0 0 1px #ffffff88;
}
.apps .many{
    background:linear-gradient(135deg, #f3f7fc, #d8e3f0);
    padding-right:4px;
    box-shadow:inset 0 0 0 1px #fff, inset -4px 0 0 #c6d4e4, inset -5px 0 0 #33475f;
}
.tray{
    display:flex;
    align-items:center;
    gap:9px;
}
time{
    width:70px;
    text-align:center;
    line-height:17px;
}
.show{
    width:15px;
    height:100%;
    border:1px solid #45586e;
    background:linear-gradient(135deg, #a9b9cb, #5f758f 50%, #8397ad);
}
`, `
<button class="start" aria-label="Start"><win-icon name="orb" size="40"></win-icon></button>
<div class="apps">${apps.map(app => `<button class="${app[2]}" aria-label="${app[1]}"><win-icon name="${app[0]}" size="36"></win-icon></button>`).join('')}</div>
<div class="tray">
    <win-icon name="up"></win-icon><win-icon name="action"></win-icon><win-icon name="lan"></win-icon><win-icon name="sound"></win-icon>
    <time>6:36 PM<br>6/8/2022</time>
</div>
<button class="show" aria-label="Show desktop"></button>`);
    }
}

customElements.define('win-icon', WinIcon);
customElements.define('desk-top', DeskTop);
customElements.define('explorer-window', ExplorerWindow);
customElements.define('nav-tree', NavTree);
customElements.define('drive-group', DriveGroup);
customElements.define('drive-tile', DriveTile);
customElements.define('file-details', FileDetails);
customElements.define('progress-strip', ProgressStrip);
customElements.define('task-bar', TaskBar);
</script>
</body>
</html>
